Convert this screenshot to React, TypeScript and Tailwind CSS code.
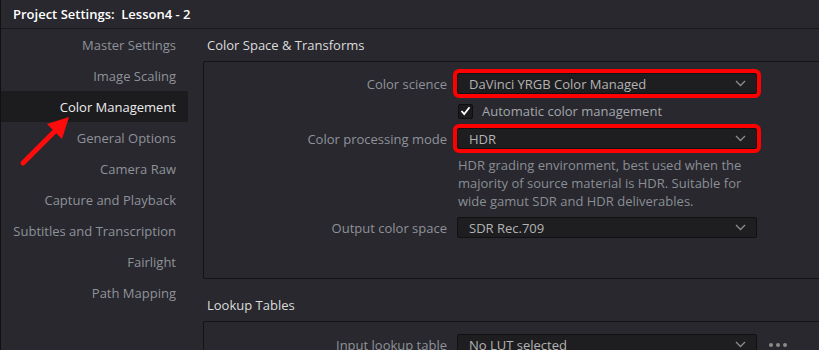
import React from 'react'

const navItems = [
  'Master Settings',
  'Image Scaling',
  'Color Management',
  'General Options',
  'Camera Raw',
  'Capture and Playback',
  'Subtitles and Transcription',
  'Fairlight',
  'Path Mapping',
]

function Chevron() {
  return (
    <svg width="11" height="7" viewBox="0 0 11 7" className="shrink-0">
      <polyline points="1,1 5.5,5.5 10,1" fill="none" stroke="#8c8c8c" strokeWidth="1.3" />
    </svg>
  )
}

function Dropdown({ value, highlight }: { value: string; highlight?: boolean }) {
  return (
    <div
      className={`ml-[10px] w-[300px] h-[21px] flex items-center justify-between pl-[11px] pr-[10px] bg-[#1e1e21] border border-[#111113] rounded-[2px] text-[#b3b3b3] ${highlight ? 'outline-[4px] outline-solid outline-[#ff0000]' : ''}`}
    >
      <span>{value}</span>
      <Chevron />
    </div>
  )
}

function Row({ label, children, className = '' }: { label: string; children: React.ReactNode; className?: string }) {
  return (
    <div className={`flex items-center shrink-0 ${className}`}>
      <div className="w-[243px] text-right text-[#8f9299]">{label}</div>
      {children}
    </div>
  )
}

export default function App() {
  return (
    <div
      className="relative w-[819px] h-[350px] overflow-hidden bg-[#28282e] text-[13px] leading-[18px] flex flex-col border-l border-[#111]"
      style={{ fontFamily: '"Open Sans", "Noto Sans", sans-serif' }}
    >
      <div className="h-[29px] shrink-0 flex items-center pl-[12px] border-b border-[#19191b] text-white font-semibold">
        Project Settings:&nbsp; Lesson4 - 2
      </div>
      <div className="flex flex-1 min-h-0">
        <div className="w-[187px] shrink-0 flex flex-col">
          {navItems.map((item) => (
            <div
              key={item}
              className={`h-[31px] shrink-0 flex items-center justify-end pr-[12px] ${item === 'Color Management' ? 'bg-[#1c1c1f] text-[#ececec]' : 'text-[#8f9299]'}`}
            >
              {item}
            </div>
          ))}
        </div>
        <div className="flex-1 pl-[15px] flex flex-col">
          <div className="h-[32px] shrink-0 flex items-center pl-[4px] text-[#dcdcdc]">Color Space &amp; Transforms</div>
          <div className="w-[700px] h-[218px] shrink-0 border border-[#131315] rounded-[2px] pt-[11px] flex flex-col">
            <Row label="Color science">
              <Dropdown value="DaVinci YRGB Color Managed" highlight />
            </Row>
            <div className="flex items-center shrink-0 ml-[254px] mt-[9px] h-[16px]">
              <div className="w-[15px] h-[15px] bg-[#1b1b1d] border border-[#0e0e10] rounded-[2px] flex items-center justify-center">
                <svg width="11" height="10" viewBox="0 0 11 10">
                  <polyline points="1.5,5 4.2,8 9.5,1.2" fill="none" stroke="#ffffff" strokeWidth="1.8" />
                </svg>
              </div>
              <span className="ml-[9px] text-[#a4a6ab]">Automatic color management</span>
            </div>
            <Row label="Color processing mode" className="mt-[9px]">
              <Dropdown value="HDR" highlight />
            </Row>
            <div className="ml-[254px] mt-[7px] w-[300px] shrink-0 text-[#8a8e95] leading-[18px]">
              HDR grading environment, best used when the majority of source material is HDR. Suitable for wide gamut SDR and HDR deliverables.
            </div>
            <Row label="Output color space" className="mt-[7px]">
              <Dropdown value="SDR Rec.709" />
            </Row>
          </div>
          <div className="h-[42px] shrink-0 pt-[17px] pl-[4px] text-[#dcdcdc]">Lookup Tables</div>
          <div className="w-[700px] h-[120px] shrink-0 border border-[#131315] rounded-[2px] pt-[12px]">
            <Row label="Input lookup table">
              <Dropdown value="No LUT selected" />
              <div className="ml-[12px] flex gap-[3px]">
                <span className="w-[4px] h-[4px] rounded-full bg-[#8a8a8a]" />
                <span className="w-[4px] h-[4px] rounded-full bg-[#8a8a8a]" />
                <span className="w-[4px] h-[4px] rounded-full bg-[#8a8a8a]" />
              </div>
            </Row>
          </div>
        </div>
      </div>
      <svg className="absolute left-0 top-0 pointer-events-none" width="819" height="350">
        <line x1="22" y1="163" x2="54" y2="131" stroke="#ff0b0b" strokeWidth="5" strokeLinecap="round" />
        <polygon points="68,117 46,124 61,139" fill="#ff0b0b" />
      </svg>
    </div>
  )
}
